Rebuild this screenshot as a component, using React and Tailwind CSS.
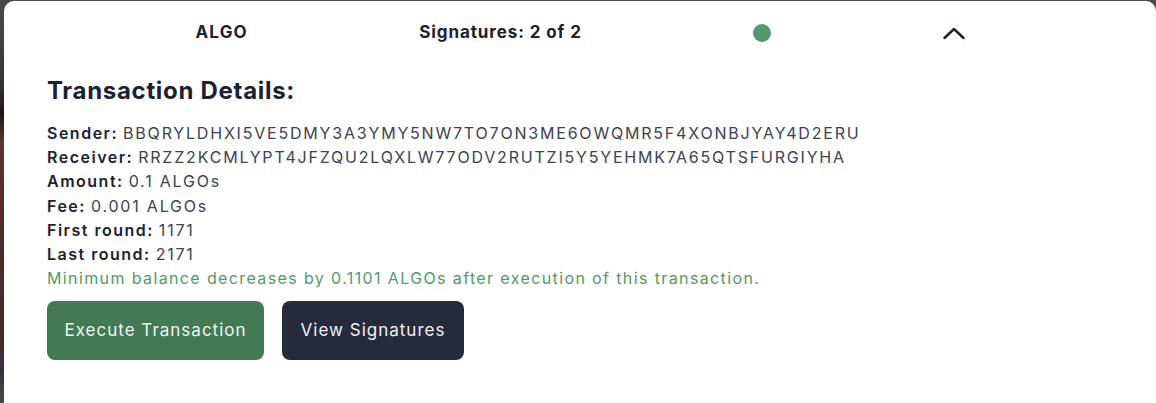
import { useState } from "react";

const details = [
  { label: "Sender:", value: "BBQRYLDHXI5VE5DMY3A3YMY5NW7TO7ON3ME6OWQMR5F4XONBJYAY4D2ERU" },
  { label: "Receiver:", value: "RRZZ2KCMLYPT4JFZQU2LQXLW77ODV2RUTZI5Y5YEHMK7A65QTSFURGIYHA" },
  { label: "Amount:", value: "0.1 ALGOs" },
  { label: "Fee:", value: "0.001 ALGOs" },
  { label: "First round:", value: "1171" },
  { label: "Last round:", value: "2171" },
];

const App = () => {
  const [open, setOpen] = useState(true);

  return (
    <div
      className="h-[403px] overflow-hidden pl-1 pt-px bg-[linear-gradient(180deg,#4a4a4a_0%,#3a3636_20%,#1e1416_28%,#5a3532_35%,#4f2c2c_60%,#46282a_85%,#3a3040_92%,#4a4a4a_100%)]"
      style={{ fontFamily: "Inter, 'Open Sans', sans-serif" }}
    >
      <div className="h-full bg-white rounded-t-[10px]">
        {/* header row */}
        <div className="flex items-center justify-evenly px-5 pt-5 h-[44px] text-[#1c2033]">
          <span className="text-[17px] font-bold tracking-[1.2px]">ALGO</span>
          <span className="text-[17px] font-bold tracking-[0.9px]">Signatures: 2 of 2</span>
          <span className="w-[18px] h-[18px] rounded-full bg-[#52996b]" />
          <button onClick={() => setOpen((p) => !p)} className="w-[22px] h-[24px] flex items-center justify-center">
            <svg width="22" height="14" viewBox="0 0 22 14" fill="none">
              <path d="M1.5 12 L11 3 L20.5 12" stroke="#1c2033" strokeWidth="2.5" strokeLinecap="round" strokeLinejoin="round" />
            </svg>
          </button>
        </div>

        {open && (
          <div className="pl-[43px] pt-8">
            <h2 className="text-[24px] leading-7 font-bold tracking-[0.7px] text-[#1c2033]">Transaction Details:</h2>
            <div className="mt-4 text-[16px] leading-[24.2px] tracking-[1.5px]">
              {details.map((d) => (
                <div key={d.label} className="flex gap-[5px]">
                  <span className="font-semibold text-[#1c2033]">{d.label}</span>
                  <span className="text-[#3d4151] tracking-[1.8px]">{d.value}</span>
                </div>
              ))}
              <p className="text-[#52996b] tracking-[1.38px]">
                Minimum balance decreases by 0.1101 ALGOs after execution of this transaction.
              </p>
            </div>
            <div className="flex gap-[18px] mt-[11px]">
              <button className="h-[59px] w-[217px] rounded-lg bg-[#437a53] text-[#f1f4f2] text-[17px] tracking-[1px]">
                Execute Transaction
              </button>
              <button className="h-[59px] w-[182px] rounded-lg bg-[#262a3d] text-[#f1f2f5] text-[17px] tracking-[1px]">
                View Signatures
              </button>
            </div>
          </div>
        )}
      </div>
    </div>
  );
};

export default App;
